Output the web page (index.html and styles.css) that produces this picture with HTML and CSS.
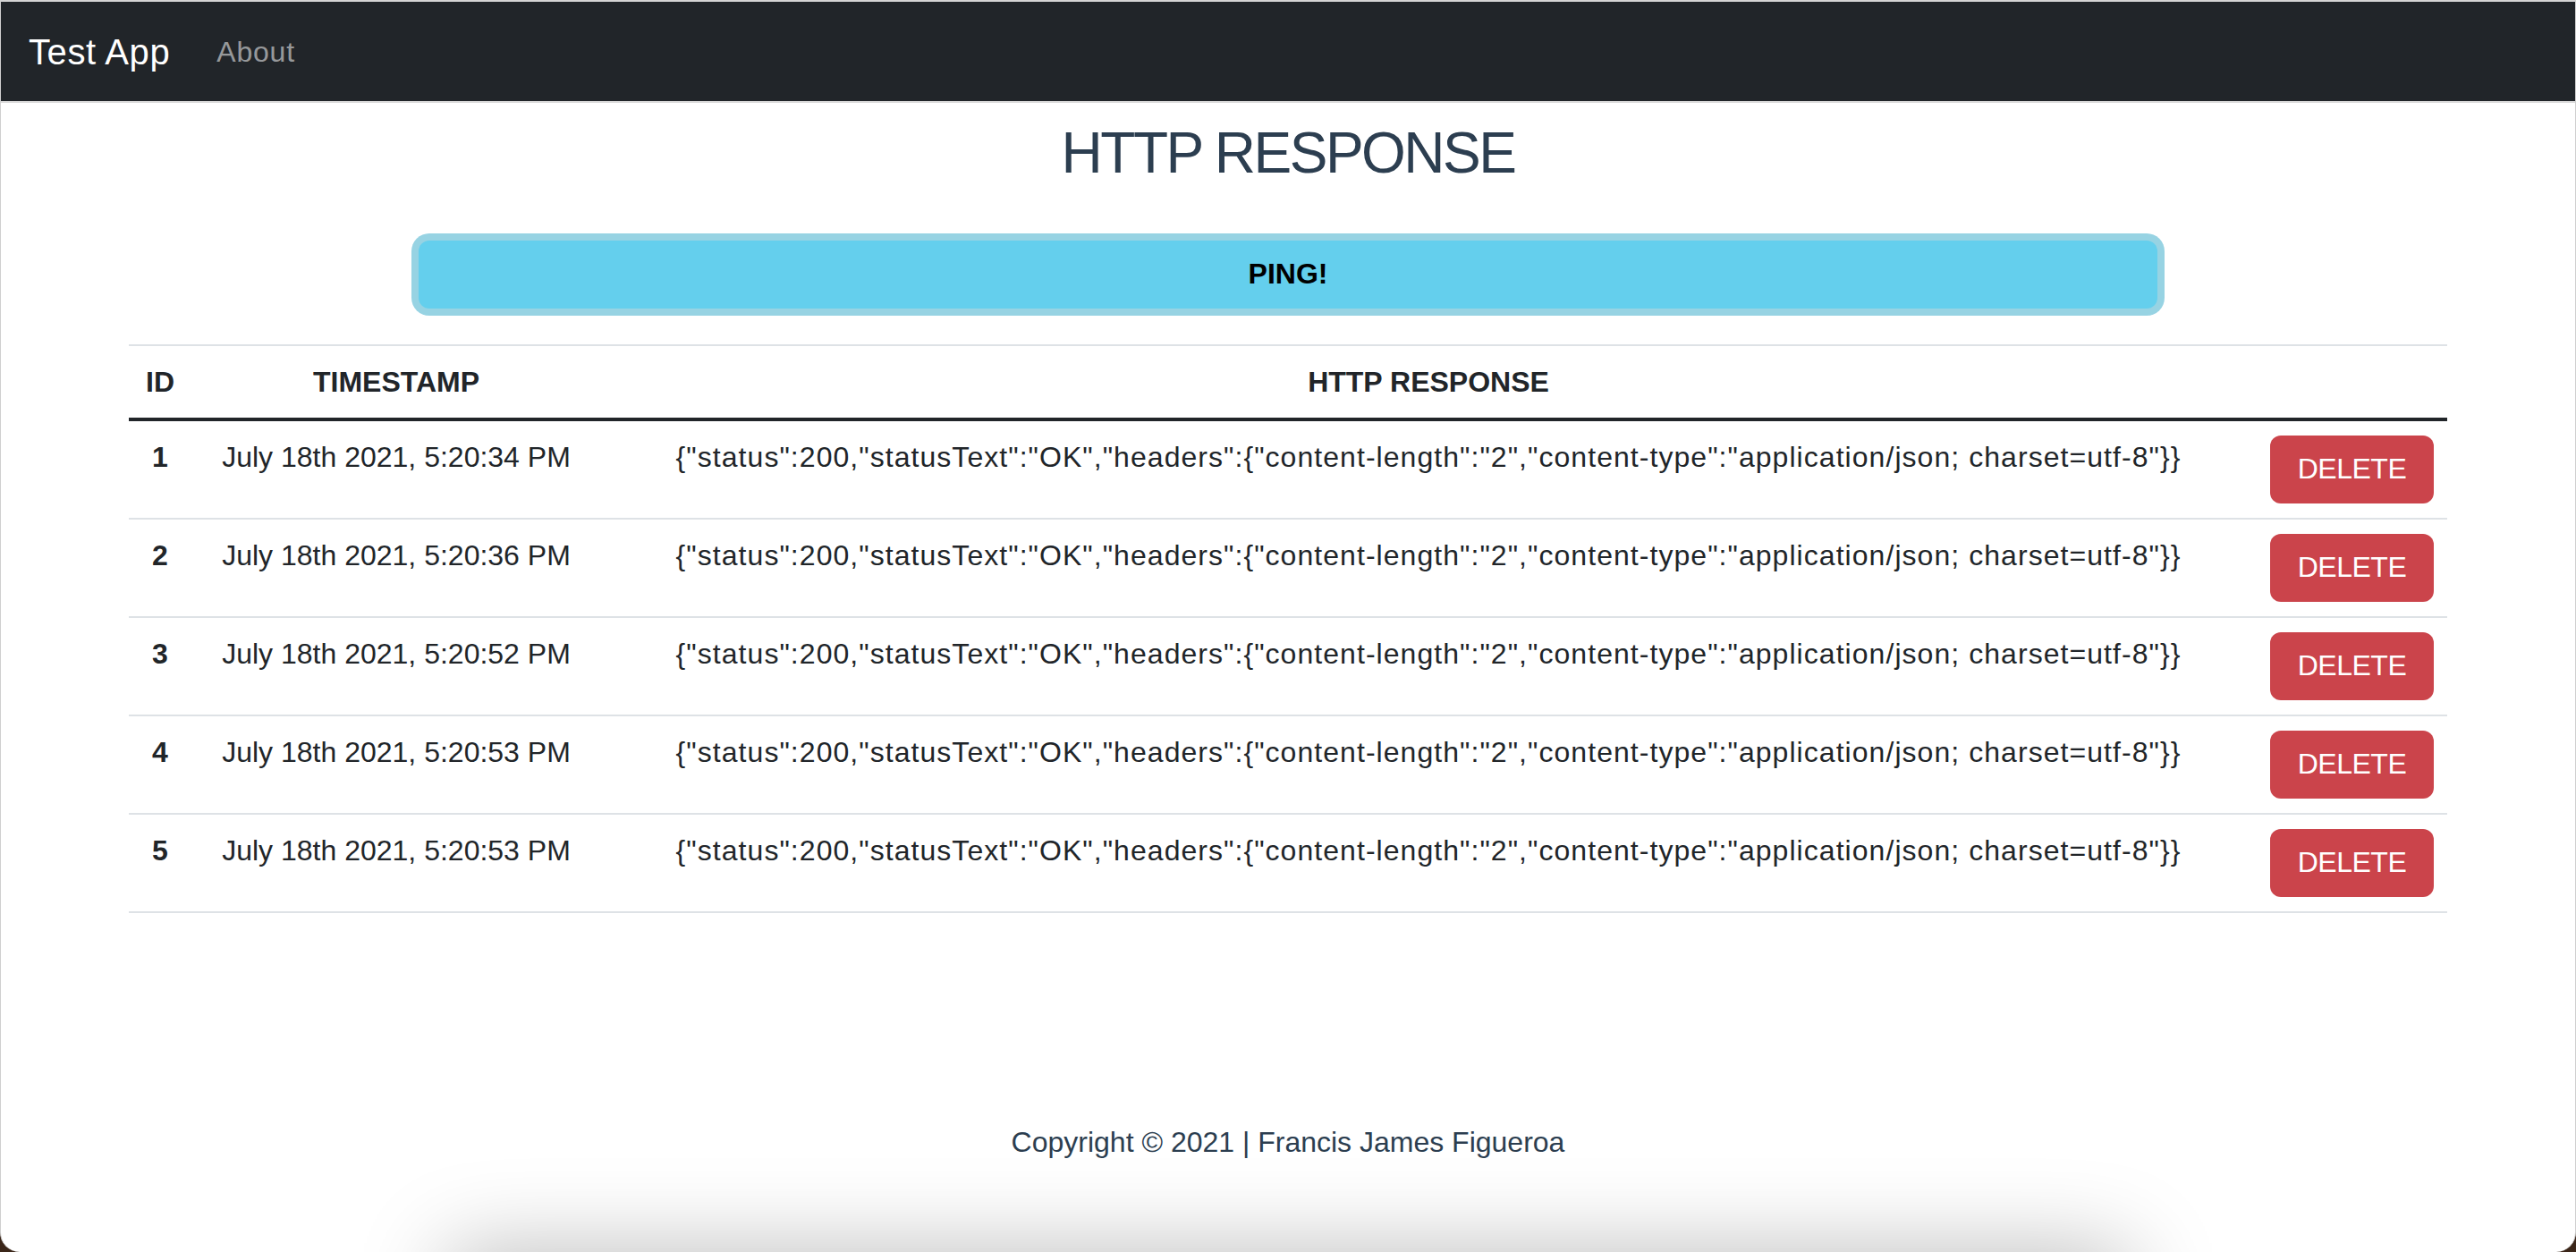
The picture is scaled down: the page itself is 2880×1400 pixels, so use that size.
FILE: index.html
```html
<!DOCTYPE html>
<html lang="en">
<head>
<meta charset="utf-8">
<title>Test App</title>
<link rel="stylesheet" href="styles.css">
</head>
<body>
<div class="window">
  <nav class="navbar">
    <a class="brand" href="#">Test App</a>
    <a class="nav-link" href="#">About</a>
  </nav>
  <main class="main">
    <h2 class="title">HTTP RESPONSE</h2>
    <div class="ping-wrap"><button class="btn-ping">PING!</button></div>
    <table class="table">
      <colgroup>
        <col class="col-id"><col class="col-ts"><col class="col-resp"><col class="col-act">
      </colgroup>
      <thead>
        <tr><th>ID</th><th>TIMESTAMP</th><th>HTTP RESPONSE</th><th></th></tr>
      </thead>
      <tbody>
        <tr><th>1</th><td>July 18th 2021, 5:20:34 PM</td><td class="resp">{"status":200,"statusText":"OK","headers":{"content-length":"2","content-type":"application/json; charset=utf-8"}}</td><td><button class="btn-del">DELETE</button></td></tr>
        <tr><th>2</th><td>July 18th 2021, 5:20:36 PM</td><td class="resp">{"status":200,"statusText":"OK","headers":{"content-length":"2","content-type":"application/json; charset=utf-8"}}</td><td><button class="btn-del">DELETE</button></td></tr>
        <tr><th>3</th><td>July 18th 2021, 5:20:52 PM</td><td class="resp">{"status":200,"statusText":"OK","headers":{"content-length":"2","content-type":"application/json; charset=utf-8"}}</td><td><button class="btn-del">DELETE</button></td></tr>
        <tr><th>4</th><td>July 18th 2021, 5:20:53 PM</td><td class="resp">{"status":200,"statusText":"OK","headers":{"content-length":"2","content-type":"application/json; charset=utf-8"}}</td><td><button class="btn-del">DELETE</button></td></tr>
        <tr><th>5</th><td>July 18th 2021, 5:20:53 PM</td><td class="resp">{"status":200,"statusText":"OK","headers":{"content-length":"2","content-type":"application/json; charset=utf-8"}}</td><td><button class="btn-del">DELETE</button></td></tr>
      </tbody>
    </table>
  </main>
  <footer class="footer">Copyright © 2021 | Francis James Figueroa</footer>
  <div class="dock-shadow"></div>
</div>
</body>
</html>
```
FILE: styles.css
```css
* { box-sizing: border-box; }
html, body { margin: 0; padding: 0; background: #3b2619; }
body {
  font-family: "Liberation Sans", Arial, sans-serif;
  font-size: 32px;
  line-height: 1.5;
  color: #212529;
}
.window {
  position: relative;
  width: 2880px;
  height: 1400px;
  overflow: hidden;
  background: #fff;
  border-top: 2px solid #d4d4d4;
  border-left: 1px solid #cfcfcf;
  border-right: 1px solid #cfcfcf;
  border-radius: 0 0 22px 22px;
  text-align: center;
}
.navbar {
  display: flex;
  align-items: center;
  height: 113px;
  background: #212529;
  padding-left: 31px;
  border-bottom: 2px solid #d8d8d8;
}
.brand {
  color: #fff;
  font-size: 40px;
  line-height: 60px;
  letter-spacing: 0.6px;
  padding: 10px 0;
  margin-right: 36px;
  text-decoration: none;
}
.nav-link {
  color: rgba(255, 255, 255, 0.55);
  font-size: 32px;
  line-height: 48px;
  letter-spacing: 0.8px;
  padding: 16px;
  text-decoration: none;
}
.main { padding: 0 143px; }
.title {
  margin: 18px 0 0;
  font-size: 64px;
  font-weight: 400;
  line-height: 1.2;
  letter-spacing: -2.5px;
  color: #2c3e50;
}
.ping-wrap {
  padding-top: 59px;
  display: flex;
  justify-content: center;
}
.btn-ping {
  width: 1944px;
  height: 76px;
  background: #64cfed;
  border: 0;
  border-radius: 12px;
  box-shadow: 0 0 0 8px #97d3e3;
  font-family: "Liberation Sans", Arial, sans-serif;
  font-weight: 700;
  font-size: 32px;
  color: #000;
}
.table {
  width: 100%;
  margin-top: 40px;
  border-collapse: collapse;
  table-layout: fixed;
}
.col-id { width: 70px; }
.col-ts { width: 458px; }
.col-resp { width: 1850px; }
.col-act { width: 214px; }
.table th, .table td {
  padding: 16px;
  vertical-align: top;
  text-align: center;
  white-space: nowrap;
}
.table thead th {
  font-weight: 700;
  border-top: 2px solid #dee2e6;
  border-bottom: 4px solid #212529;
}
.table tbody th, .table tbody td {
  border-bottom: 2px solid #dee2e6;
}
.table tbody th { font-weight: 700; }
.table td.resp { letter-spacing: 1.05px; }
.btn-del {
  width: 183px;
  height: 76px;
  background: #cb444b;
  border: 0;
  border-radius: 12px;
  color: #fff;
  font-family: "Liberation Sans", Arial, sans-serif;
  font-size: 32px;
  letter-spacing: -0.5px;
}
.footer {
  margin-top: 232px;
  color: #2c3e50;
  font-size: 32px;
  line-height: 48px;
}
.dock-shadow {
  position: absolute;
  left: 500px;
  right: 500px;
  bottom: -100px;
  height: 100px;
  box-shadow: 0 0 100px rgba(0, 0, 0, 0.28);
}
```
